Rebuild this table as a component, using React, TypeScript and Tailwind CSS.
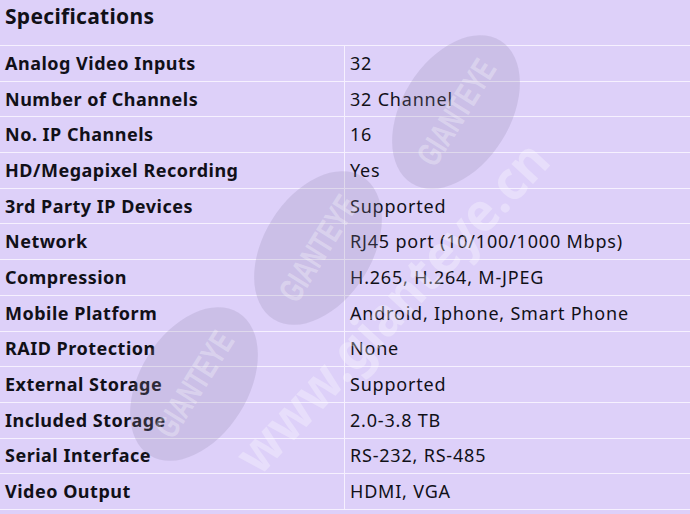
const specs: [string, string][] = [
  ['Analog Video Inputs', '32'],
  ['Number of Channels', '32 Channel'],
  ['No. IP Channels', '16'],
  ['HD/Megapixel Recording', 'Yes'],
  ['3rd Party IP Devices', 'Supported'],
  ['Network', 'RJ45 port (10/100/1000 Mbps)'],
  ['Compression', 'H.265, H.264, M-JPEG'],
  ['Mobile Platform', 'Android, Iphone, Smart Phone'],
  ['RAID Protection', 'None'],
  ['External Storage', 'Supported'],
  ['Included Storage', '2.0-3.8 TB'],
  ['Serial Interface', 'RS-232, RS-485'],
  ['Video Output', 'HDMI, VGA'],
];

const Watermark = () => (
  <svg
    className="pointer-events-none absolute inset-0"
    width="690"
    height="514"
    viewBox="0 0 690 514"
  >
    {[
      [456, 112],
      [318, 248],
      [194, 384],
    ].map(([cx, cy]) => (
      <g key={cx} transform={`rotate(-58 ${cx} ${cy})`}>
        <ellipse cx={cx} cy={cy} rx={84} ry={54} fill="#8f84a8" fillOpacity={0.22} />
        <text
          x={cx}
          y={cy + 12}
          textAnchor="middle"
          fontFamily="'Liberation Sans Narrow', 'Liberation Sans', sans-serif"
          fontWeight="bold"
          fontSize="34"
          fill="#ffffff"
          fillOpacity={0.3}
          textLength={118}
          lengthAdjust="spacingAndGlyphs"
        >
          GIANTEYE
        </text>
      </g>
    ))}
    <text
      x={395}
      y={325}
      textAnchor="middle"
      fontFamily="'Noto Sans', sans-serif"
      fontWeight="bold"
      fontSize="54"
      fill="#ffffff"
      fillOpacity={0.3}
      transform="rotate(-47 395 310)"
      textLength={430}
      lengthAdjust="spacingAndGlyphs"
    >
      www.gianteye.cn
    </text>
  </svg>
);

export default function App() {
  return (
    <div
      className="relative w-[690px] h-[514px] overflow-hidden bg-[#ddd0f9] text-[#111018]"
      style={{ fontFamily: "'Noto Sans', 'Open Sans', sans-serif" }}
    >
      <div className="h-[46px] border-b border-[#f6f1ff] px-[5px]">
        <h2 className="text-[21px] font-bold leading-[32px] tracking-[0.3px]">Specifications</h2>
      </div>
      <div className="grid grid-cols-[345px_1fr]">
        {specs.map(([label, value]) => (
          <div key={label} className="contents">
            <div className="h-[35.7px] border-b border-r border-[#f6f1ff] px-[5px] flex items-center text-[18px] font-bold tracking-[0.5px]">
              {label}
            </div>
            <div className="h-[35.7px] border-b border-[#f6f1ff] px-[5px] flex items-center text-[18px] tracking-[0.8px]">
              {value}
            </div>
          </div>
        ))}
      </div>
      <Watermark />
    </div>
  );
}
